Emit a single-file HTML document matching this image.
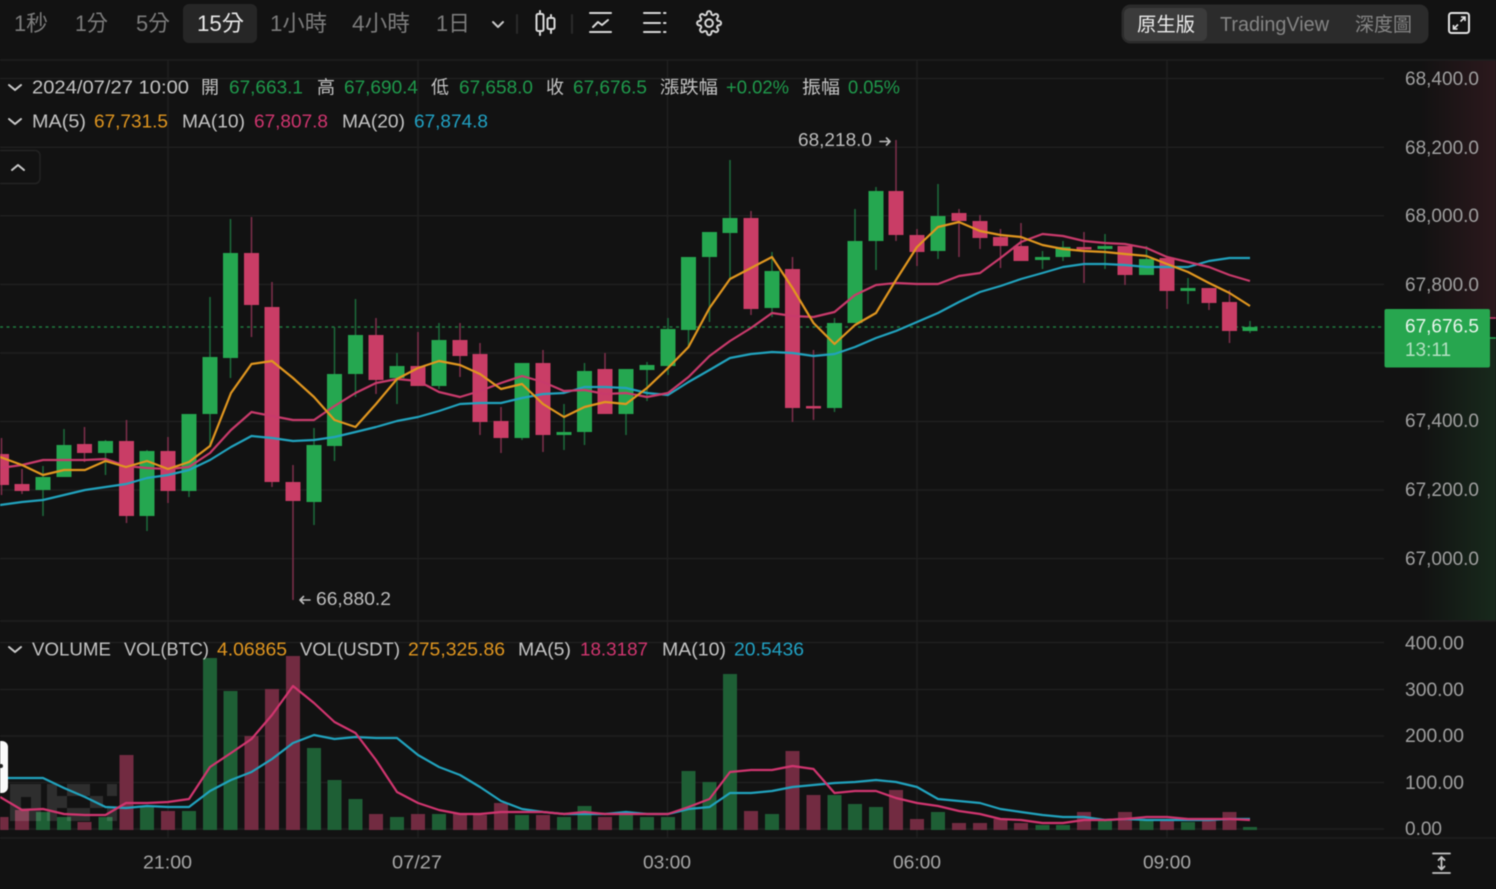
<!DOCTYPE html>
<html lang="zh-Hant"><head><meta charset="utf-8"><title>K-line chart</title>
<style>
html,body{margin:0;padding:0;background:#121212;width:1496px;height:889px;overflow:hidden}
svg{display:block;filter:blur(.45px)}
text{font-family:"Liberation Sans","Noto Sans CJK TC",sans-serif;dominant-baseline:auto}
</style></head><body>
<svg xmlns="http://www.w3.org/2000/svg" width="1496" height="889" viewBox="0 0 1496 889">
<defs>
<linearGradient id="rh" x1="0" x2="1" y1="0" y2="0"><stop offset="0" stop-color="#2c191d" stop-opacity="0"/><stop offset="1" stop-color="#2c191d"/></linearGradient>
<linearGradient id="gh" x1="0" x2="1" y1="0" y2="0"><stop offset="0" stop-color="#18291c" stop-opacity="0"/><stop offset="1" stop-color="#18291c"/></linearGradient>
</defs>
<rect width="1496" height="889" fill="#121212"/>
<rect x="1420" y="60" width="76" height="258" fill="url(#rh)"/>
<rect x="1420" y="338" width="76" height="283" fill="url(#gh)"/>

<!-- grid -->
<g stroke="#1f1f1f" stroke-width="1.5" fill="none">
<path d="M0 60H1496M0 621H1496M0 838H1496"/>
<path d="M0 78.5H1384M0 147.2H1384M0 215.8H1384M0 284.4H1384M0 353H1384M0 421.5H1384M0 490H1384M0 558.6H1384"/>
<path d="M0 642.5H1384M0 689.5H1384M0 736H1384M0 782.5H1384M0 829H1384"/>
<path d="M168 60V838M418 60V838M667.5 60V838M917 60V838M1167 60V838"/>
</g>

<!-- volume -->
<path stroke="#1e5f35" stroke-width="14" fill="none" d="M43 812V830M64 817V830M105.500 817V830M147 807V830M189 811V830M210 658V830M230.500 691V830M314 748V830M334.500 780V830M355.500 799V830M397 817V830M439 814V830M522 815V830M564 817V830M584.500 806V830M626 814V830M647 817V830M668 817V830M688.500 771V830M709.500 782V830M730 674V830M772 814V830M834.500 795V830M855 804V830M876 807V830M938 812V830M1042.500 825V830M1063 825V830M1105 819V830M1146.500 820V830M1188 822V830M1250 827V830"/>
<path stroke="#722b41" stroke-width="14" fill="none" d="M1.500 817V830M22 810V830M84.500 822V830M126.500 755V830M168 811V830M251.500 736V830M272 689V830M293 656V830M376 814V830M418 814V830M460 814V830M480 815V830M501 803V830M543 815V830M605 817V830M751 811V830M792.500 751V830M813.500 795V830M896 790V830M917 819V830M959 823V830M980 823V830M1000.500 819V830M1021 823V830M1084 812V830M1125 812V830M1167 820V830M1209 820V830M1229.500 812V830"/>
<!-- watermark -->
<g fill="#fff" fill-opacity=".12">
<path d="M10 784H41V821H10ZM21 797V808H31V797Z" fill-rule="evenodd"/>
<path d="M47 784H57V821H47ZM57 796H67V808H57ZM67 784H78V796H67ZM67 808H78V821H67ZM78 784H90V796H78ZM78 808H90V821H78ZM90 796H103V808H90ZM107 784H117V796H107ZM107 808H117V821H107Z"/>
</g>
<g fill="none" stroke-width="2.200" stroke-linejoin="round">
<polyline stroke="#21a2bd" points="0,778 22,778 43,778 64,788 85,797 105.500,807 126,808 147,806 168,807 189,807 210,791 231,780 251.500,772 272,759 293,743 314,735 334.500,739 355.500,737 376,738 397,738 418,755 439,767 460,775 480,787 501,801 522,809 543,812 564,814 584.500,814 605,814 626,812 647,814 668,814 688.500,809 709.500,807 730,793 751,793 772,791 792.500,787 813.500,785 834.500,783 855,782 876,780 896,782 917,787 938,799 959,801 980,803 1000.500,809 1021,812 1042.500,815 1063,817 1084,817 1105,820 1125,819 1146.500,820 1167,820 1188,820 1209,820 1229.500,819 1250,819"/>
<polyline stroke="#d0356f" points="0,797 22,810 43,809 64,814 85,815 105.500,815 126,803 147,803 168,802 189,799 210,767 231,753 251.500,739 272,715 293,686 314,703 334.500,722 355.500,733 376,760 397,792 418,803 439,810 460,814 480,814 501,812 522,812 543,812 564,814 584.500,812 605,814 626,814 647,814 668,814 688.500,807 709.500,799 730,772 751,770 772,770 792.500,766 813.500,769 834.500,793 855,791 876,791 896,798 917,803 938,806 959,811 980,814 1000.500,819 1021,820 1042.500,823 1063,823 1084,820 1105,820 1125,819 1146.500,817 1167,817 1188,819 1209,819 1229.500,819 1250,820"/>
</g>

<!-- candles: wicks -->
<path stroke="#1c6b3b" stroke-width="1.500" fill="none" d="M43 466V516M64 429V477M105.500 440V475M147 450V531M189 414V497M210 297V447M230.500 219V378M314 428V525M334.500 327V461M355.500 299V397M397 353V404M439 323V389M522 363V440M564 404V450M584.500 363V445M626 369V435M647 362V401M668 318V375M688.500 257V347M709.500 232V322M730 160V279M772 252V317M834.500 318V412M855 209V323M876 187V270M938 184V259M1042.500 251V269M1063 241V261M1105 234V269M1146.500 246V275M1188 278V304M1250 321V333"/>
<path stroke="#7e2e4b" stroke-width="1.500" fill="none" d="M1.500 438V495M22 469V494M84.500 427V462M126.500 420V523M168 437V503M251.500 217V337M272 282V487M293 465V600M376 318V394M418 332V386M460 323V377M480 343V435M501 407V453M543 350V452M605 353V414M751 211V315M792.500 257V422M813.500 350V420M896 140V241M917 229V266M959 209V257M980 215V249M1000.500 229V268M1021 223V261M1084 232V283M1125 246V285M1167 258V309M1209 288V310M1229.500 290V343"/>
<!-- current price dotted -->
<path d="M0 327H1384" stroke="#1f7a40" stroke-width="1.500" stroke-dasharray="3 3.500" fill="none"/>
<!-- candle bodies -->
<path stroke="#25a750" stroke-width="15" fill="none" d="M43 477V490M64 445V477M105.500 441V453M147 451V516M189 414V491M210 357V414M230.500 253V358M314 445V502M334.500 374V446M355.500 335V374M397 366V378M439 340V386M522 363V438M564 432V435M584.500 371V432M626 369V414M647 365V370M668 329V366M688.500 257V330M709.500 232V257M730 218V233M772 271V308M834.500 323V408M855 241V323M876 191V241M938 216V251M1042.500 257V260M1063 247V257M1105 246V249M1146.500 259V275M1188 288V291M1250 327V331"/>
<path stroke="#c93d66" stroke-width="15" fill="none" d="M1.500 454V485M22 484V491M84.500 444V453M126.500 441V516M168 451V491M251.500 253V305M272 307V482M293 482V501M376 335V380M418 366V386M460 340V356M480 354V422M501 421V438M543 363V435M605 369V414M751 218V309M792.500 269V408M813.500 406V408.500M896 191V235M917 235V252M959 213V221M980 221V238M1000.500 237V246M1021 246V261M1084 247V249.500M1125 246V275M1167 258V291M1209 288V303M1229.500 302V331"/>
<!-- MAs -->
<g fill="none" stroke-width="2.200" stroke-linejoin="round">
<polyline stroke="#21a2bd" points="0,505 22,502 43,500 64,495 85,490 105.500,487 126,484 147,478 168,475 189,470 210,460 231,447 251.500,436 272,438 293,441 314,440 334.500,437 355.500,432 376,427 397,421 418,417 439,411 460,404 480,403 501,403 522,398 543,394 564,393 584.500,387 605,387 626,388 647,393 668,395 688.500,382 709.500,370 730,358 751,354 772,352 792.500,353 813.500,356 834.500,354 855,347 876,338 896,331 917,322 938,313 959,302 980,292 1000.500,286 1021,279 1042.500,273 1063,267 1084,264 1105,264 1125,265 1146.500,267 1167,267 1188,267 1209,261 1229.500,258 1250,258"/>
<polyline stroke="#c83a6b" points="0,468 22,465 43,460 64,460 85,460 105.500,459 126,466 147,468 168,469 189,467 210,453 231,430 251.500,412 272,416 293,420 314,420 334.500,406 355.500,393 376,383 397,379 418,381 439,392 460,397 480,391 501,383 522,376 543,382 564,391 584.500,390 605,394 626,393 647,397 668,393 688.500,377 709.500,356 730,341 751,328 772,313 792.500,316 813.500,317 834.500,312 855,295 876,285 896,283 917,284 938,284 959,276 980,273 1000.500,258 1021,242 1042.500,234 1063,236 1084,241 1105,243 1125,244 1146.500,248 1167,257 1188,262 1209,267 1229.500,275 1250,281"/>
<polyline stroke="#e0961f" points="0,457 22,465 43,475 64,470 85,470 105.500,461 126,467 147,461 168,469 189,462 210,446 231,393 251.500,364 272,361 293,378 314,397 334.500,420 355.500,427 376,404 397,379 418,368 439,361 460,365 480,374 501,389 522,384 543,404 564,417 584.500,407 605,402 626,404 647,388 668,368 688.500,347 709.500,308 730,279 751,268 772,257 792.500,288 813.500,323 834.500,344 855,325 876,313 896,280 917,247 938,227 959,222 980,231 1000.500,235 1021,237 1042.500,245 1063,249 1084,251 1105,252 1125,254 1146.500,256 1167,264 1188,272 1209,283 1229.500,293 1250,306"/>
</g>

<!-- toolbar -->
<rect x="183" y="4" width="74" height="39" rx="6" fill="#262626"/>
<g font-size="22" fill="#7c7c7c">
<text x="14" y="31" textLength="34" lengthAdjust="spacingAndGlyphs">1秒</text>
<text x="75" y="31" textLength="33" lengthAdjust="spacingAndGlyphs">1分</text>
<text x="136" y="31" textLength="34" lengthAdjust="spacingAndGlyphs">5分</text>
<text x="197" y="31" textLength="47" lengthAdjust="spacingAndGlyphs" fill="#e8e8e8">15分</text>
<text x="270" y="31" textLength="57" lengthAdjust="spacingAndGlyphs">1小時</text>
<text x="352" y="31" textLength="58" lengthAdjust="spacingAndGlyphs">4小時</text>
<text x="436" y="31" textLength="34" lengthAdjust="spacingAndGlyphs">1日</text>
</g>
<g fill="none" stroke="#c8c8c8" stroke-width="2" stroke-linecap="round" stroke-linejoin="round">
<path d="M493 22l5 5 5-5"/>
<path stroke="#2a2a2a" d="M517 15V33M572 15V33"/>
<path stroke="#d8d8d8" d="M540 11V14M540 31V35M551 15V18M551 29V33"/>
<rect x="536.500" y="14" width="7" height="17" rx="1.500" stroke="#d8d8d8"/>
<rect x="547.500" y="18" width="7" height="11" rx="1.500" stroke="#d8d8d8"/>
<path d="M590 13H611M590 32H611M593 27L598 22 602 25 608 20" stroke="#d8d8d8"/>
<path d="M644 13H660M644 23H660M644 32H660M664 13H665.500M664 23H665.500M664 32H665.500" stroke="#d8d8d8"/>
<g transform="translate(696,10) scale(1.09)" stroke="#d8d8d8" stroke-width="1.800">
<path d="M12 15.500a3.500 3.500 0 1 0 0-7 3.500 3.500 0 0 0 0 7z"/>
<path d="M19.400 15a1.650 1.650 0 0 0 .33 1.820l.06.06a2 2 0 0 1 0 2.830 2 2 0 0 1-2.830 0l-.06-.06a1.650 1.650 0 0 0-1.820-.33 1.650 1.650 0 0 0-1 1.510V21a2 2 0 0 1-2 2 2 2 0 0 1-2-2v-.09A1.650 1.650 0 0 0 9 19.400a1.650 1.650 0 0 0-1.820.33l-.06.06a2 2 0 0 1-2.830 0 2 2 0 0 1 0-2.830l.06-.06a1.650 1.650 0 0 0 .33-1.820 1.650 1.650 0 0 0-1.510-1H3a2 2 0 0 1-2-2 2 2 0 0 1 2-2h.09A1.650 1.650 0 0 0 4.600 9a1.650 1.650 0 0 0-.33-1.820l-.06-.06a2 2 0 0 1 0-2.830 2 2 0 0 1 2.830 0l.06.06a1.650 1.650 0 0 0 1.820.33H9a1.650 1.650 0 0 0 1-1.510V3a2 2 0 0 1 2-2 2 2 0 0 1 2 2v.09a1.650 1.650 0 0 0 1 1.510 1.650 1.650 0 0 0 1.820-.33l.06-.06a2 2 0 0 1 2.830 0 2 2 0 0 1 0 2.830l-.06.06a1.650 1.650 0 0 0-.33 1.820V9a1.650 1.650 0 0 0 1.510 1H21a2 2 0 0 1 2 2 2 2 0 0 1-2 2h-.09a1.650 1.650 0 0 0-1.510 1z"/>
</g>
</g>
<rect x="1121.500" y="4.500" width="307" height="39" rx="9" fill="#2b2b2b"/>
<rect x="1124" y="8" width="83" height="33" rx="6" fill="#3b3b3b"/>
<text x="1137" y="31" font-size="19.500" fill="#ededed" textLength="58" lengthAdjust="spacingAndGlyphs">原生版</text>
<text x="1220" y="31" font-size="20" fill="#858585" textLength="109" lengthAdjust="spacingAndGlyphs">TradingView</text>
<text x="1355" y="31" font-size="19.500" fill="#858585" textLength="57" lengthAdjust="spacingAndGlyphs">深度圖</text>
<g fill="none" stroke="#e4e4e4" stroke-width="2">
<rect x="1449" y="13" width="20" height="20" rx="2.500"/>
<path d="M1460.500 21.500L1465 17M1461 17H1465V21M1453.500 25V29H1457.500M1453.500 29L1458 24.500" stroke-width="1.600"/>
</g>

<!-- legends -->
<g fill="none" stroke="#c9c9c9" stroke-width="2" stroke-linecap="round" stroke-linejoin="round">
<path d="M9 85l6 5 6-5M9 119l6 5 6-5M9 647l6 5 6-5"/>
<rect x="-4" y="150.500" width="44" height="33" rx="5" stroke="#232323" stroke-width="1.500"/>
<path d="M12 170l6-5 6 5"/>
</g>
<g font-size="18.500" fill="#c4c4c4">
<text x="32" y="93.500" textLength="157" lengthAdjust="spacingAndGlyphs">2024/07/27 10:00</text>
<text x="201" y="93.500" font-size="18">開</text>
<text x="229" y="93.500" fill="#1f9a4c" textLength="74" lengthAdjust="spacingAndGlyphs">67,663.1</text>
<text x="317" y="93.500" font-size="18">高</text>
<text x="344" y="93.500" fill="#1f9a4c" textLength="74" lengthAdjust="spacingAndGlyphs">67,690.4</text>
<text x="431" y="93.500" font-size="18">低</text>
<text x="459" y="93.500" fill="#1f9a4c" textLength="74" lengthAdjust="spacingAndGlyphs">67,658.0</text>
<text x="546" y="93.500" font-size="18">收</text>
<text x="573" y="93.500" fill="#1f9a4c" textLength="74" lengthAdjust="spacingAndGlyphs">67,676.5</text>
<text x="660" y="93.500" font-size="18" textLength="58" lengthAdjust="spacingAndGlyphs">漲跌幅</text>
<text x="726" y="93.500" fill="#1f9a4c" textLength="63" lengthAdjust="spacingAndGlyphs">+0.02%</text>
<text x="802" y="93.500" font-size="18" textLength="38" lengthAdjust="spacingAndGlyphs">振幅</text>
<text x="848" y="93.500" fill="#1f9a4c" textLength="52" lengthAdjust="spacingAndGlyphs">0.05%</text>

<text x="32" y="127.500" textLength="54" lengthAdjust="spacingAndGlyphs">MA(5)</text>
<text x="94" y="127.500" fill="#e0961f" textLength="74" lengthAdjust="spacingAndGlyphs">67,731.5</text>
<text x="182" y="127.500" textLength="63" lengthAdjust="spacingAndGlyphs">MA(10)</text>
<text x="254" y="127.500" fill="#d0356f" textLength="74" lengthAdjust="spacingAndGlyphs">67,807.8</text>
<text x="342" y="127.500" textLength="63" lengthAdjust="spacingAndGlyphs">MA(20)</text>
<text x="414" y="127.500" fill="#21a2c4" textLength="74" lengthAdjust="spacingAndGlyphs">67,874.8</text>

<text x="32" y="655.500" textLength="79" lengthAdjust="spacingAndGlyphs">VOLUME</text>
<text x="124" y="655.500" textLength="85" lengthAdjust="spacingAndGlyphs">VOL(BTC)</text>
<text x="217" y="655.500" fill="#e0961f" textLength="70" lengthAdjust="spacingAndGlyphs">4.06865</text>
<text x="300" y="655.500" textLength="100" lengthAdjust="spacingAndGlyphs">VOL(USDT)</text>
<text x="408" y="655.500" fill="#e0961f" textLength="97" lengthAdjust="spacingAndGlyphs">275,325.86</text>
<text x="518" y="655.500" textLength="53" lengthAdjust="spacingAndGlyphs">MA(5)</text>
<text x="580" y="655.500" fill="#d0356f" textLength="68" lengthAdjust="spacingAndGlyphs">18.3187</text>
<text x="662" y="655.500" textLength="64" lengthAdjust="spacingAndGlyphs">MA(10)</text>
<text x="734" y="655.500" fill="#21a2c4" textLength="70" lengthAdjust="spacingAndGlyphs">20.5436</text>

<text x="798" y="146" fill="#bdbdbd" textLength="74" lengthAdjust="spacingAndGlyphs">68,218.0</text>
<text x="316" y="605" fill="#bdbdbd" textLength="75" lengthAdjust="spacingAndGlyphs">66,880.2</text>
</g>
<g fill="none" stroke="#bdbdbd" stroke-width="1.600" stroke-linecap="round" stroke-linejoin="round">
<path d="M880 141.500H890M886.500 138l3.500 3.500-3.500 3.500"/>
<path d="M300 600H310M303.500 596.500L300 600l3.500 3.500"/>
</g>

<!-- price axis -->
<g font-size="19" fill="#a0a0a0">
<text x="1405" y="85" textLength="74" lengthAdjust="spacingAndGlyphs">68,400.0</text>
<text x="1405" y="154" textLength="74" lengthAdjust="spacingAndGlyphs">68,200.0</text>
<text x="1405" y="222" textLength="74" lengthAdjust="spacingAndGlyphs">68,000.0</text>
<text x="1405" y="291" textLength="74" lengthAdjust="spacingAndGlyphs">67,800.0</text>
<text x="1405" y="427" textLength="74" lengthAdjust="spacingAndGlyphs">67,400.0</text>
<text x="1405" y="496" textLength="74" lengthAdjust="spacingAndGlyphs">67,200.0</text>
<text x="1405" y="565" textLength="74" lengthAdjust="spacingAndGlyphs">67,000.0</text>
<text x="1405" y="649.500" textLength="59" lengthAdjust="spacingAndGlyphs">400.00</text>
<text x="1405" y="696" textLength="59" lengthAdjust="spacingAndGlyphs">300.00</text>
<text x="1405" y="742" textLength="59" lengthAdjust="spacingAndGlyphs">200.00</text>
<text x="1405" y="789" textLength="59" lengthAdjust="spacingAndGlyphs">100.00</text>
<text x="1405" y="835" textLength="37" lengthAdjust="spacingAndGlyphs">0.00</text>
</g>
<path d="M1490 318H1496" stroke="#c83a6b" stroke-width="1.500"/>
<path d="M1490 338H1496" stroke="#25a750" stroke-width="1.500"/>
<rect x="1384.500" y="309" width="105.500" height="58.500" rx="2" fill="#27a64f"/>
<text x="1405" y="332.500" font-size="19" fill="#e8f5ec" textLength="74" lengthAdjust="spacingAndGlyphs">67,676.5</text>
<text x="1405" y="356" font-size="19" fill="#b4e0c2" textLength="46" lengthAdjust="spacingAndGlyphs">13:11</text>

<!-- time axis -->
<g font-size="18.500" fill="#a8a8a8">
<text x="143" y="868.500" textLength="49" lengthAdjust="spacingAndGlyphs">21:00</text>
<text x="392" y="868.500" textLength="50" lengthAdjust="spacingAndGlyphs">07/27</text>
<text x="643" y="868.500" textLength="48" lengthAdjust="spacingAndGlyphs">03:00</text>
<text x="893" y="868.500" textLength="48" lengthAdjust="spacingAndGlyphs">06:00</text>
<text x="1143" y="868.500" textLength="48" lengthAdjust="spacingAndGlyphs">09:00</text>
</g>
<g fill="none" stroke="#c4c4c4" stroke-width="1.800" stroke-linecap="round" stroke-linejoin="round">
<path d="M1433 853.500H1450M1433 873H1450M1441.500 857V869.500M1438.500 860l3-3 3 3M1438.500 866.500l3 3 3-3"/>
</g>

<!-- white side tab -->
<rect x="-12" y="741" width="20" height="52" rx="6" fill="#fafafa"/>
<circle cx="1" cy="766" r="2" fill="#222"/>
</svg>
</body></html>
